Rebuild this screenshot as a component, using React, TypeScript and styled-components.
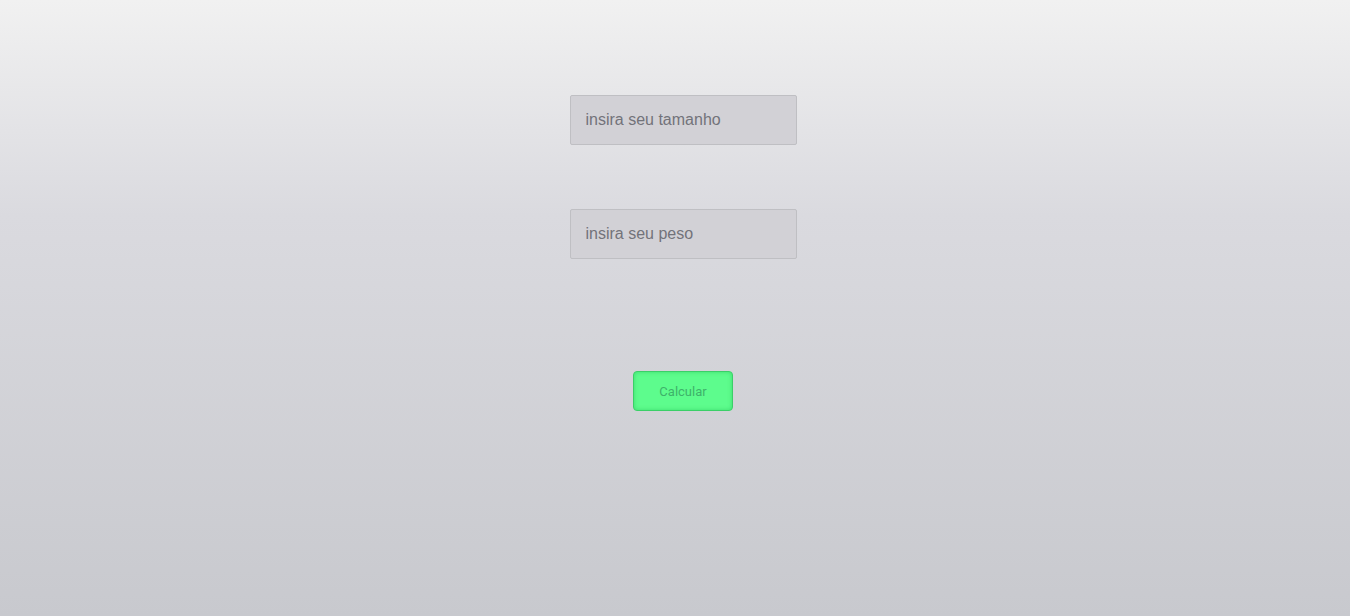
import React from 'react';
import styled, { createGlobalStyle } from 'styled-components';

const GlobalStyle = createGlobalStyle`
  html, body {
    margin: 0;
    padding: 0;
  }
  body {
    font-family: "Liberation Sans", Arial, sans-serif;
    min-height: 616px;
    background: linear-gradient(to bottom, #f1f1f1 0%, #dadadf 35%, #c8c9ce 100%);
  }
`;

const Page = styled.div`
  min-height: 616px;
  display: flex;
  flex-direction: column;
  align-items: center;
  padding: 95px 0 0 16px;
  box-sizing: border-box;
`;

const Field = styled.input<{ $gap: number }>`
  width: 227px;
  height: 50px;
  box-sizing: border-box;
  margin-bottom: ${p => p.$gap}px;
  padding: 0 15px;
  background: #d2d1d6;
  border: 1px solid #bfbfc3;
  border-radius: 2px;
  font-family: "Liberation Sans", Arial, sans-serif;
  font-size: 16px;
  color: #555;
  outline: none;

  &::placeholder {
    color: #72737a;
  }
`;

const CalcButton = styled.button`
  width: 100px;
  height: 40px;
  box-sizing: border-box;
  background: #5dfc8d;
  border: 1px solid #3bcf68;
  border-radius: 4px;
  box-shadow: inset 0 0 4px rgba(40, 200, 90, 0.6);
  font-family: Roboto, "Liberation Sans", Arial, sans-serif;
  font-size: 13px;
  color: #3db26a;
  cursor: pointer;
`;

const App: React.FC = () => {
  return (
    <>
      <GlobalStyle />
      <Page>
        <Field $gap={64} placeholder="insira seu tamanho" />
        <Field $gap={112} placeholder="insira seu peso" />
        <CalcButton>Calcular</CalcButton>
      </Page>
    </>
  );
};

export default App;
